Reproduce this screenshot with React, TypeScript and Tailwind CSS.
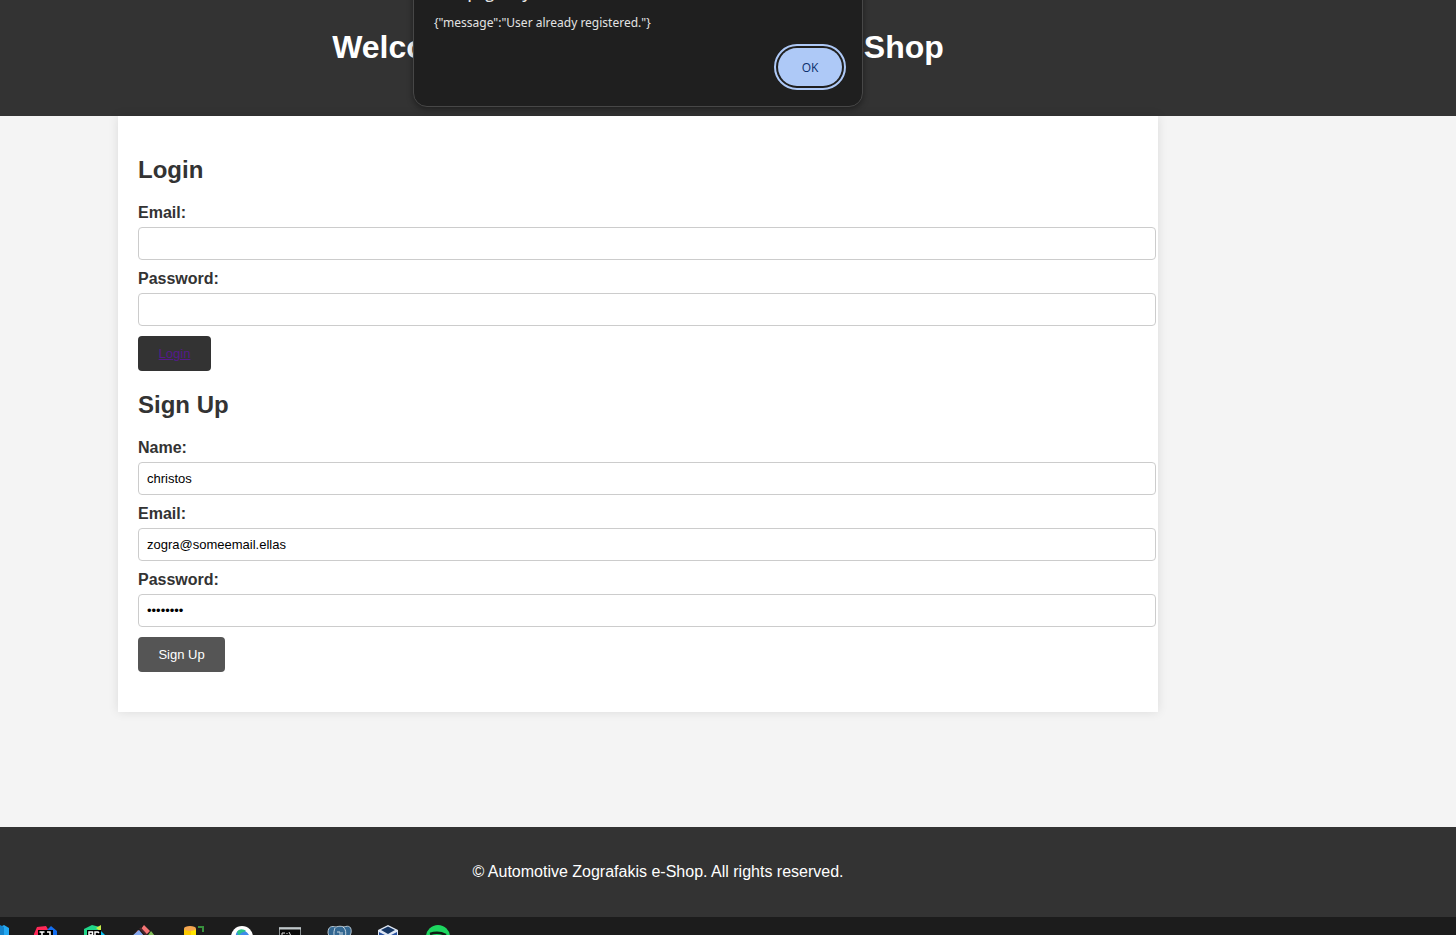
import React from "react";

type FieldProps = {
  id: string;
  label: string;
  type?: string;
  value?: string;
};

function Field({ id, label, type = "text", value = "" }: FieldProps) {
  return (
    <div className="flex flex-col">
      <label htmlFor={id} className="mb-[5px] text-base leading-[18px] font-bold">
        {label}
      </label>
      <input
        id={id}
        type={type}
        defaultValue={value}
        className="-mr-[18px] mb-[10px] h-[33px] rounded-[4px] border border-[#ccc] bg-white px-2 text-[13px] text-black outline-none"
      />
    </div>
  );
}

function AlertDialog() {
  return (
    <div
      role="alertdialog"
      aria-labelledby="alert-title"
      aria-describedby="alert-message"
      className="absolute -top-[18px] left-[413px] w-[450px] rounded-b-[14px] border border-[#474747] bg-[#1f1f1f] px-5 pb-5 font-['Open_Sans',sans-serif] text-[#e3e3e3] shadow-[0_2px_6px_rgba(0,0,0,0.4)]"
    >
      <h2 id="alert-title" className="text-[15px] leading-5 font-semibold">
        This page says
      </h2>
      <p id="alert-message" className="mt-[10px] font-['Noto_Sans',sans-serif] text-[12px] leading-5">
        {'{"message":"User already registered."}'}
      </p>
      <div className="mt-[15px] flex justify-end">
        <button
          type="button"
          className="h-[38px] w-16 rounded-full bg-[#aec9f7] pt-px text-[12px] text-[#0b2f6b] outline-2 outline-offset-2 outline-[#aec9f7]"
        >
          OK
        </button>
      </div>
    </div>
  );
}

const icon = "h-[26px] w-[26px] shrink-0";

function Taskbar() {
  return (
    <nav aria-label="Taskbar" className="h-[18px] overflow-hidden bg-[#1c1c1c]">
      <div className="-ml-4 flex gap-[23px] pt-2">
        <svg viewBox="0 0 26 26" className={icon}>
          <path d="M18 1l2-1 5 3v20l-6 3L6 15l-4 3v-9l4 2z" fill="#23a8f2" />
          <path d="M16 0l4 2v22l-4-4z" fill="#1583cb" />
        </svg>
        <svg viewBox="0 0 26 26" className={icon}>
          <path d="M1 9L4 2l9-1 3 5v12H1z" fill="#fe2857" />
          <path d="M14 5l4-4 6 5v15l-10 3z" fill="#146ff1" />
          <rect x="5" y="5" width="15" height="16" fill="#000" />
          <path d="M6.500 7h5M9 7v6M6.500 13h5M14 7h3v6h-3" stroke="#fff" strokeWidth="1.500" fill="none" />
        </svg>
        <svg viewBox="0 0 26 26" className={icon}>
          <path d="M2 4l8-4 8 2 1 14-17 4z" fill="#21d789" />
          <path d="M14 3l5-3v7z" fill="#c5ee4a" />
          <path d="M18 5l6 6-3 13-8-4z" fill="#07c3f2" />
          <rect x="5" y="5" width="14" height="16" fill="#000" />
          <path d="M7 13V7h3.500v3H7M17 8l-1-1h-3v6h4" stroke="#fff" strokeWidth="1.500" fill="none" />
        </svg>
        <svg viewBox="0 0 26 26" className={icon}>
          <path d="M7 5l12 12-5 5L3 10z" fill="#e8645c" />
          <path d="M8 5l5 6-6 6-6-6z" fill="#83a8ef" />
          <path d="M13 0l6 6-4 4-5-6z" fill="#f57575" />
          <path d="M20 6l4 5-6 6-3-4z" fill="#80bd57" />
          <path d="M9 3l10 11" stroke="#4c252b" strokeWidth="2" />
        </svg>
        <svg viewBox="0 0 26 26" className={icon}>
          <path d="M4 4v18h12V4z" fill="#fcc900" />
          <path d="M11 5v17h5V4z" fill="#ffe500" />
          <ellipse cx="10" cy="3.500" rx="6" ry="2.500" fill="#f4a650" />
          <path d="M18 2h5v5" stroke="#38913d" strokeWidth="2" fill="none" />
        </svg>
        <svg viewBox="0 0 26 26" className={icon}>
          <circle cx="13" cy="12" r="11" fill="#fff" />
          <path d="M7 9c1-5 9-6 13 1l-5 2-2 8c-4-1-7-6-6-11z" fill="#3e8be9" />
          <path d="M8 7c2-4 7-3 9-1l-5 2-2 3z" fill="#2bc48a" />
        </svg>
        <svg viewBox="0 0 26 26" className={icon}>
          <rect x="1.500" y="2.500" width="21" height="20" fill="#0a0a0a" stroke="#8a9092" />
          <path d="M1 3.500h22" stroke="#bfc6c9" strokeWidth="2" />
          <path d="M7 8H4v4h3M9 8v1M9 11v1M11 7l3 6" stroke="#ddd" fill="none" />
        </svg>
        <svg viewBox="0 0 26 26" className={icon}>
          <path d="M1 8c0-7 4-7 8-6 3-1 5-1 8 0 5-2 8 0 7 6l-4 10-7 7-8-5z" fill="#336791" stroke="#b6c7d4" />
          <path d="M8 3c-2 5-1 9 1 12M16 2c4 3 3 9 1 13M10 7h3v8M15 7v6" stroke="#c9d7e1" fill="none" />
        </svg>
        <svg viewBox="0 0 26 26" className={icon}>
          <path d="M12 0l10 5v13l-10 7-10-7V5z" fill="#dfe7f4" />
          <path d="M12 1.500L19 5l-7 4-7-4z" fill="#153562" />
          <path d="M3 7l8 4v12l-8-5zM21 7l-8 4v12l8-5z" fill="#2851a0" />
        </svg>
        <svg viewBox="0 0 26 26" className={icon}>
          <circle cx="13" cy="12" r="12" fill="#1ed760" />
          <path d="M5 9c6-2 12-1 16 1" stroke="#101c14" strokeWidth="2.500" fill="none" />
        </svg>
      </div>
    </nav>
  );
}

export default function App() {
  return (
    <div className="relative flex min-h-screen flex-col overflow-hidden bg-[#f4f4f4] font-['Liberation_Sans',sans-serif] text-[#333]">
      <header className="bg-[#333] pt-[29px] pr-[180px] pb-[51px] text-center text-white">
        <h1 className="text-[32px] leading-9 font-bold">Welcome Automotive Zografakis e-Shop</h1>
      </header>
      <AlertDialog />
      <div className="flex-1 pr-[180px]">
        <main className="mx-auto max-w-[1040px] bg-white px-5 py-10 shadow-[0_0_10px_rgba(0,0,0,0.1)]">
          <form onSubmit={(e) => e.preventDefault()}>
            <h2 className="mb-5 text-2xl leading-7 font-bold">Login</h2>
            <Field id="login-email" label="Email:" type="email" />
            <Field id="login-password" label="Password:" type="password" />
            <button type="button" className="block h-[35px] w-[73px] rounded-[4px] bg-[#333] text-[13px]">
              <a href="#login" className="text-[#551a8b] underline">
                Login
              </a>
            </button>
          </form>
          <form className="mt-5" onSubmit={(e) => e.preventDefault()}>
            <h2 className="mb-5 text-2xl leading-7 font-bold">Sign Up</h2>
            <Field id="name" label="Name:" value="christos" />
            <Field id="email" label="Email:" type="email" value="zogra@someemail.ellas" />
            <Field id="password" label="Password:" type="password" value="password" />
            <button type="submit" className="block h-[35px] w-[87px] rounded-[4px] bg-[#555] text-[13px] text-white">
              Sign Up
            </button>
          </form>
        </main>
      </div>
      <footer className="bg-[#333] py-9 pr-[140px] text-center text-base leading-[18px] text-white">
        <p>© Automotive Zografakis e-Shop. All rights reserved.</p>
      </footer>
      <Taskbar />
    </div>
  );
}
